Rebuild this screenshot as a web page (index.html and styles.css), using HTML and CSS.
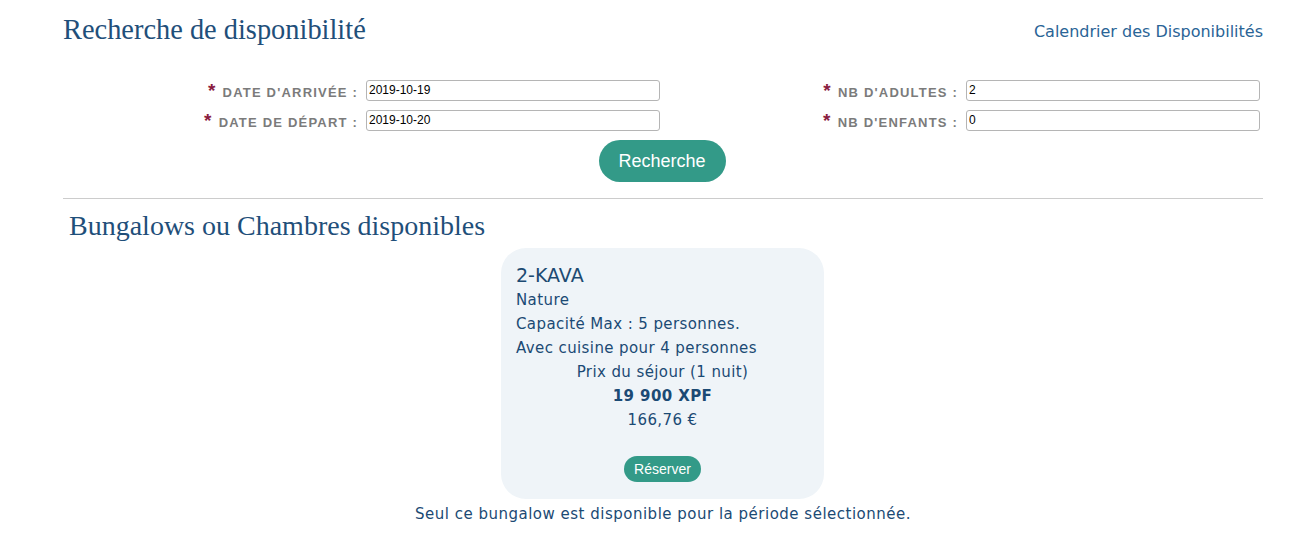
FILE: index.html
```html
<!DOCTYPE html>
<html lang="fr">
<head>
<meta charset="utf-8">
<title>Recherche de disponibilité</title>
<link rel="stylesheet" href="styles.css">
</head>
<body>
<div class="page">
  <div class="top">
    <h1 class="title">Recherche de disponibilité</h1>
    <a class="cal-link" href="#">Calendrier des Disponibilités</a>
  </div>
  <form class="search">
    <div class="grid">
      <div class="field">
        <label class="lbl"><span class="req">*</span>DATE D'ARRIVÉE :</label>
        <input class="inp" type="text" value="2019-10-19">
      </div>
      <div class="field">
        <label class="lbl"><span class="req">*</span>NB D'ADULTES :</label>
        <input class="inp" type="text" value="2">
      </div>
      <div class="field">
        <label class="lbl"><span class="req">*</span>DATE DE DÉPART :</label>
        <input class="inp" type="text" value="2019-10-20">
      </div>
      <div class="field">
        <label class="lbl"><span class="req">*</span>NB D'ENFANTS :</label>
        <input class="inp" type="text" value="0">
      </div>
    </div>
    <div class="btn-row"><button class="btn-search" type="button">Recherche</button></div>
  </form>
  <hr class="sep">
  <h2 class="subtitle">Bungalows ou Chambres disponibles</h2>
  <div class="card-row">
    <div class="card">
      <div class="card-name">2-KAVA</div>
      <div class="line">Nature</div>
      <div class="line">Capacité Max : 5 personnes.</div>
      <div class="line">Avec cuisine pour 4 personnes</div>
      <div class="line center">Prix du séjour (1 nuit)</div>
      <div class="line center strong">19 900 XPF</div>
      <div class="line center">166,76 €</div>
      <div class="book-row"><button class="btn-book" type="button">Réserver</button></div>
    </div>
  </div>
  <p class="note">Seul ce bungalow est disponible pour la période sélectionnée.</p>
</div>
</body>
</html>
```
FILE: styles.css
```css
html, body {
  margin: 0;
  padding: 0;
  background: #ffffff;
}
body {
  font-family: "DejaVu Sans", Verdana, sans-serif;
  color: #1b4a74;
}
.page {
  width: 1200px;
  margin-left: 63px;
}
.top {
  display: flex;
  justify-content: space-between;
  align-items: flex-start;
  height: 70px;
}
.title {
  font-family: "Liberation Serif", serif;
  font-weight: normal;
  font-size: 28.4px;
  color: #1f4f7a;
  margin: 14px 0 0 0;
  line-height: 32px;
}
.cal-link {
  font-size: 16px;
  color: #2a6496;
  text-decoration: none;
  margin-top: 22px;
}
.search {
  margin: 0;
}
.grid {
  display: grid;
  grid-template-columns: 600px 600px;
  row-gap: 9px;
  margin-top: 9px;
}
.field {
  display: grid;
  grid-template-columns: 295px 294px;
  column-gap: 8px;
  align-items: center;
  height: 21px;
}
.lbl {
  font-family: "Liberation Sans", Arial, sans-serif;
  font-weight: bold;
  font-size: 13px;
  letter-spacing: 1.2px;
  color: #7b7b7b;
  text-align: right;
  display: flex;
  justify-content: flex-end;
  align-items: center;
  position: relative;
  top: 2px;
}
.req {
  color: #8a1d40;
  font-size: 19px;
  margin-right: 6px;
  position: relative;
  top: -1px;
}
.inp {
  box-sizing: border-box;
  width: 294px;
  height: 21px;
  border: 1px solid #b5b5b5;
  border-radius: 3px;
  padding: 0 2px;
  font-family: "Liberation Sans", Arial, sans-serif;
  font-size: 12px;
  color: #000;
  background: #fff;
}
.btn-row {
  display: flex;
  justify-content: center;
  margin-top: 10px;
}
.btn-search {
  width: 127px;
  height: 42px;
  border: none;
  border-radius: 21px;
  background: #339a88;
  color: #ffffff;
  font-family: "Liberation Sans", Arial, sans-serif;
  font-size: 18px;
  cursor: pointer;
  position: relative;
  left: -1px;
}
.sep {
  border: none;
  border-top: 1px solid #cccccc;
  margin: 16px 0 0 0;
}
.subtitle {
  font-family: "Liberation Serif", serif;
  font-weight: normal;
  font-size: 28px;
  color: #1f4f7a;
  margin: 11px 0 0 6px;
  line-height: 32px;
}
.card-row {
  display: flex;
  justify-content: center;
  margin-top: 6px;
  padding-right: 1px;
}
.card {
  box-sizing: border-box;
  width: 323px;
  height: 251px;
  background: #eff4f8;
  border-radius: 25px;
  padding: 14px 15px 0 15px;
}
.card-name {
  font-size: 19px;
  line-height: 26px;
  color: #1c4a72;
}
.line {
  font-size: 15px;
  line-height: 24px;
  letter-spacing: 0.4px;
}
.center {
  text-align: center;
}
.strong {
  font-weight: bold;
}
.book-row {
  display: flex;
  justify-content: center;
  margin-top: 24px;
}
.btn-book {
  width: 77px;
  height: 26px;
  border: none;
  border-radius: 13px;
  background: #339a88;
  color: #ffffff;
  font-family: "Liberation Sans", Arial, sans-serif;
  font-size: 14px;
  padding: 0;
  cursor: pointer;
}
.note {
  text-align: center;
  font-size: 15px;
  letter-spacing: 0.5px;
  margin: 5px 0 0 0;
  line-height: 20px;
}
```
